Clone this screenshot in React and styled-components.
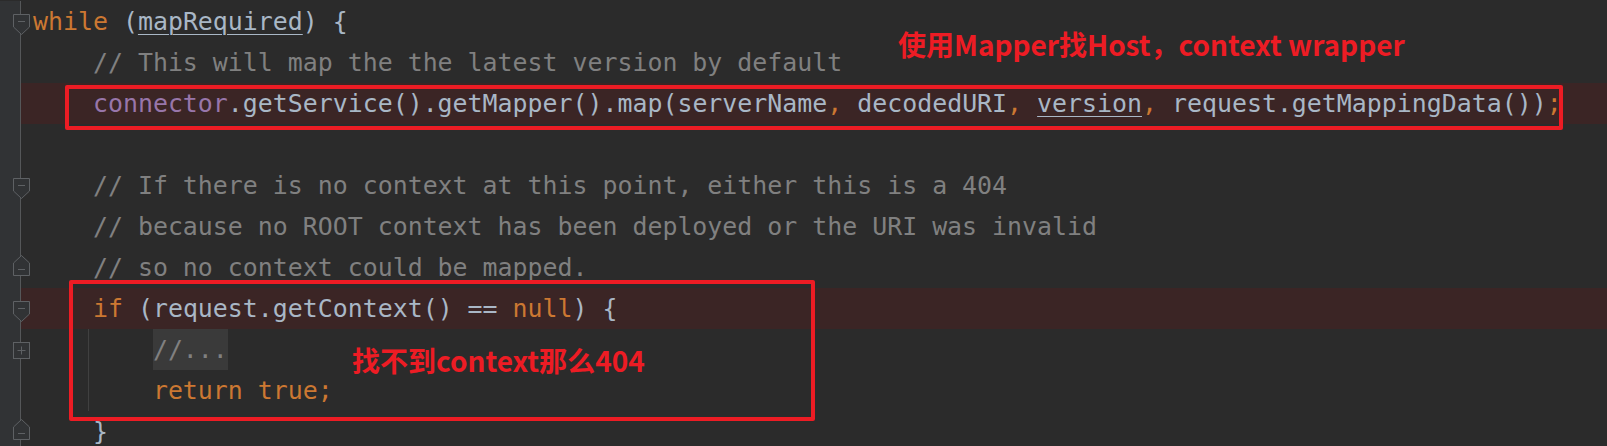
import React from 'react';
import styled, { createGlobalStyle } from 'styled-components';

const GlobalStyle = createGlobalStyle`
    html, body {
        margin: 0;
        padding: 0;
        height: 100%;
        overflow: hidden;
        background: #2b2b2b;
    }
`;

const colors = {
    kw: '#cc7832',
    id: '#a9b7c6',
    field: '#9876aa',
    cm: '#808080',
};

const Editor = styled.div`
    position: relative;
    padding-top: 1px;
    font-family: "DejaVu Sans Mono", "Liberation Mono", monospace;
    font-size: 24.9px;
    line-height: 41px;
    color: #a9b7c6;
`;

const Row = styled.div`
    display: flex;
    height: 41px;
`;

const Gutter = styled.div`
    flex: 0 0 21px;
    width: 21px;
    min-width: 0;
    display: flex;
    align-items: flex-start;
    padding-left: 13px;
    padding-top: ${p => (p.$fold === 'end' ? 8 : 13)}px;
    box-sizing: border-box;
    background: #313335;
    border-right: 1px solid #555759;
`;

const Code = styled.div`
    flex: 1;
    min-width: 0;
    padding-left: 12px;
    white-space: pre;
    background-color: ${p => (p.$hl ? '#3b2525' : 'transparent')};
    ${p => p.$guide && `
        background-image: linear-gradient(#404040, #404040);
        background-size: 1px 100%;
        background-position: 67px 0;
        background-repeat: no-repeat;
    `}
`;

const Tok = styled.span`
    color: ${p => colors[p.$k] || colors.id};
    ${p => p.$u && `
        text-decoration: underline;
        text-decoration-thickness: 1px;
        text-underline-offset: 4px;
    `}
`;

const Folded = styled.span`
    display: inline-block;
    height: 41px;
    background: #3a3a3a;
    color: #808080;
`;

const MarkerSvg = styled.svg`
    flex: 0 0 auto;
    position: relative;
    z-index: 1;
    overflow: visible;
`;

const Box = styled.div`
    position: absolute;
    left: ${p => p.$x}px;
    top: ${p => p.$y}px;
    width: ${p => p.$w}px;
    height: ${p => p.$h}px;
    box-sizing: border-box;
    border: 4px solid #ed1c24;
    border-radius: 2px;
    pointer-events: none;
`;

const Note = styled.div`
    position: absolute;
    left: ${p => p.$x}px;
    top: ${p => p.$y}px;
    font-family: "Noto Sans CJK SC", "Noto Sans", sans-serif;
    font-weight: 700;
    font-size: 28px;
    line-height: 28px;
    color: #ed1c24;
    white-space: nowrap;
`;

const stroke = '#5e6164';
const fill = '#313335';

const Marker = ({ type }) => {
    if (type === 'start') {
        return (
            <MarkerSvg width="17" height="21" viewBox="0 0 17 21">
                <path d="M0.5 0.5H16.5V13L8.5 20.5L0.5 13Z" fill={fill} stroke={stroke} />
                <path d="M5 7.5H12" stroke={stroke} />
            </MarkerSvg>
        );
    }
    if (type === 'end') {
        return (
            <MarkerSvg width="17" height="21" viewBox="0 0 17 21">
                <path d="M0.5 20.5H16.5V8L8.5 0.5L0.5 8Z" fill={fill} stroke={stroke} />
                <path d="M5 14.5H12" stroke={stroke} />
            </MarkerSvg>
        );
    }
    if (type === 'plus') {
        return (
            <MarkerSvg width="17" height="17" viewBox="0 0 17 17">
                <rect x="0.5" y="0.5" width="16" height="16" fill={fill} stroke={stroke} />
                <path d="M4.5 8.5H12.5M8.5 4.5V12.5" stroke={stroke} />
            </MarkerSvg>
        );
    }
    return null;
};

const lines = [
    { fold: 'start', toks: [['kw', 'while'], ['id', ' ('], ['id', 'mapRequired', true], ['id', ') {']] },
    { toks: [['id', '    '], ['cm', '// This will map the the latest version by default']] },
    {
        hl: true,
        toks: [
            ['id', '    '], ['field', 'connector'], ['id', '.getService().getMapper().map(serverName'],
            ['kw', ','], ['id', ' decodedURI'], ['kw', ','], ['id', ' '], ['id', 'version', true],
            ['kw', ','], ['id', ' request.getMappingData())'], ['kw', ';'],
        ],
    },
    { toks: [] },
    { fold: 'start', toks: [['id', '    '], ['cm', '// If there is no context at this point, either this is a 404']] },
    { toks: [['id', '    '], ['cm', '// because no ROOT context has been deployed or the URI was invalid']] },
    { fold: 'end', toks: [['id', '    '], ['cm', '// so no context could be mapped.']] },
    { fold: 'start', hl: true, toks: [['id', '    '], ['kw', 'if'], ['id', ' (request.getContext() == '], ['kw', 'null'], ['id', ') {']] },
    { fold: 'plus', guide: true, toks: [['id', '        '], ['fold', '//...']] },
    { guide: true, toks: [['id', '        '], ['kw', 'return'], ['id', ' '], ['kw', 'true'], ['kw', ';']] },
    { fold: 'end', toks: [['id', '    }']] },
];

const App = () => (
    <>
        <GlobalStyle />
        <Editor>
            {lines.map((line, i) => (
                <Row key={i}>
                    <Gutter $fold={line.fold}>
                        <Marker type={line.fold} />
                    </Gutter>
                    <Code $hl={line.hl} $guide={line.guide}>
                        {line.toks.map(([k, t, u], j) =>
                            k === 'fold'
                                ? <Folded key={j}>{t}</Folded>
                                : <Tok key={j} $k={k} $u={u}>{t}</Tok>
                        )}
                        {line.toks.length === 0 && ' '}
                    </Code>
                </Row>
            ))}
            <Box $x={65} $y={85} $w={1498} $h={45} />
            <Box $x={69} $y={280} $w={746} $h={141} />
            <Note $x={898} $y={30}>使用Mapper找Host，context wrapper</Note>
            <Note $x={352} $y={346}>找不到context那么404</Note>
        </Editor>
    </>
);

export default App;
